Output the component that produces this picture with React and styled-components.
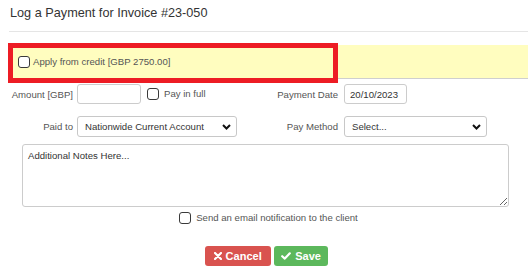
import React from "react";
import styled, { createGlobalStyle } from "styled-components";

const Global = createGlobalStyle`
  html, body { margin: 0; padding: 0; background: #fff; }
  body { font-family: "Liberation Sans", Arial, sans-serif; color: #333; overflow: hidden; }
  * { box-sizing: border-box; }
`;

const Page = styled.div`
  width: 528px;
  height: 273px;
  display: flex;
  flex-direction: column;
  position: relative;
`;

const Header = styled.div`
  margin-left: 9px;
  padding: 5px 0 9px 1px;
  border-bottom: 1px solid #e5e5e5;
`;

const Title = styled.h4`
  margin: 0;
  font-size: 12.7px;
  line-height: 17px;
  font-weight: normal;
  color: #333;
`;

const CreditBand = styled.div`
  position: relative;
  margin: 13px 0 0 9px;
  height: 34px;
  background: #fffdbf;
  border-bottom: 1px solid #cfcfcf;
  display: flex;
  align-items: center;
  padding-left: 9px;
  gap: 3px;
`;

const Highlight = styled.div`
  position: absolute;
  left: -1px;
  top: -2px;
  width: 330px;
  height: 40px;
  border: 5px solid #ed1c24;
  pointer-events: none;
`;

const Check = styled.input.attrs({ type: "checkbox" })`
  appearance: none;
  -webkit-appearance: none;
  margin: 0;
  width: 12px;
  height: 12px;
  border: 1px solid #3a3a3a;
  border-radius: 3px;
  background: #fff;
  flex: none;
`;

const SmallText = styled.span`
  font-size: 9.6px;
  color: ${(p) => p.$color || "#555"};
  line-height: 12px;
  margin-left: ${(p) => p.$shift || 0}px;
`;

const Row = styled.div`
  display: grid;
  grid-template-columns: 77px 160px 107px 143px;
  align-items: center;
  margin-top: ${(p) => p.$top}px;
  height: ${(p) => p.$height}px;
`;

const Label = styled.label`
  text-align: right;
  padding-right: ${(p) => p.$pad}px;
  font-size: 9.6px;
  color: #555;
  white-space: nowrap;
`;

const Field = styled.div`
  display: flex;
  align-items: center;
  gap: ${(p) => p.$gap || 0}px;
  height: 100%;
`;

const TextInput = styled.input`
  width: ${(p) => p.$w}px;
  height: 20px;
  border: 1px solid #cccccc;
  border-radius: 3px;
  padding: 0 5px;
  font-family: inherit;
  font-size: 9.6px;
  color: #333;
  outline: none;
`;

const SelectWrap = styled.div`
  position: relative;
  width: ${(p) => p.$w}px;
  height: 21px;
`;

const Select = styled.select`
  appearance: none;
  -webkit-appearance: none;
  width: 100%;
  height: 100%;
  border: 1px solid #c8c8c8;
  border-radius: 3px;
  background: #fff;
  padding: 0 0 0 7px;
  font-family: inherit;
  font-size: 9.6px;
  color: #333;
  outline: none;
`;

const Chevron = styled.svg`
  position: absolute;
  right: 6px;
  top: 8px;
  pointer-events: none;
`;

const Notes = styled.textarea`
  margin: 7px 0 0 22px;
  width: 487px;
  height: 63px;
  border: 1px solid #cccccc;
  border-radius: 3px;
  padding: 4px 5px;
  font-family: inherit;
  font-size: 9.6px;
  line-height: 13px;
  color: #333;
  resize: vertical;
  outline: none;
  &::placeholder { color: #333; opacity: 1; }
`;

const EmailRow = styled.div`
  display: flex;
  align-items: center;
  justify-content: center;
  gap: 5px;
  margin: 5px 0 0 9px;
  height: 12px;
`;

const Actions = styled.div`
  display: flex;
  justify-content: center;
  gap: 3px;
  margin: 22px 0 0 5px;
`;

const Button = styled.button`
  display: inline-flex;
  align-items: center;
  gap: 4px;
  height: 20px;
  padding: 0 ${(p) => p.$pad}px;
  border: none;
  border-radius: 3px;
  background: ${(p) => p.$bg};
  color: #fff;
  font-family: inherit;
  font-weight: bold;
  font-size: 11px;
  cursor: pointer;
`;

const Times = () => (
  <svg width="8" height="8" viewBox="0 0 8 8">
    <path d="M1 1 L7 7 M7 1 L1 7" stroke="#fff" strokeWidth="2.2" strokeLinecap="round" />
  </svg>
);

const Tick = () => (
  <svg width="10" height="8" viewBox="0 0 10 8">
    <path d="M1.2 4.2 L3.8 6.6 L8.8 1.3" stroke="#fff" strokeWidth="2.2" fill="none" strokeLinecap="round" strokeLinejoin="round" />
  </svg>
);

const ChevronIcon = () => (
  <Chevron width="9" height="6" viewBox="0 0 9 6">
    <path d="M1 1 L4.5 4.5 L8 1" stroke="#111" strokeWidth="2" fill="none" />
  </Chevron>
);

export default function App() {
  return (
    <Page>
      <Global />
      <Header>
        <Title>Log a Payment for Invoice #23-050</Title>
      </Header>
      <CreditBand>
        <Check id="credit" />
        <SmallText as="label" htmlFor="credit">Apply from credit [GBP 2750.00]</SmallText>
        <Highlight />
      </CreditBand>
      <Row $top={5} $height={20}>
        <Label $pad={4}>Amount [GBP]</Label>
        <Field $gap={6}>
          <TextInput $w={64} />
          <Check id="full" />
          <SmallText as="label" htmlFor="full" $shift={-1}>Pay in full</SmallText>
        </Field>
        <Label $pad={6}>Payment Date</Label>
        <Field>
          <TextInput $w={63} defaultValue="20/10/2023" />
        </Field>
      </Row>
      <Row $top={12} $height={21}>
        <Label $pad={4}>Paid to</Label>
        <Field>
          <SelectWrap $w={160}>
            <Select defaultValue="nw">
              <option value="nw">Nationwide Current Account</option>
            </Select>
            <ChevronIcon />
          </SelectWrap>
        </Field>
        <Label $pad={6}>Pay Method</Label>
        <Field>
          <SelectWrap $w={143}>
            <Select defaultValue="">
              <option value="">Select...</option>
            </Select>
            <ChevronIcon />
          </SelectWrap>
        </Field>
      </Row>
      <Notes placeholder="Additional Notes Here..." />
      <EmailRow>
        <Check id="email" />
        <SmallText as="label" htmlFor="email">Send an email notification to the client</SmallText>
      </EmailRow>
      <Actions>
        <Button $bg="#d9534f" $pad={9}>
          <Times />
          Cancel
        </Button>
        <Button $bg="#5cb85c" $pad={7.5}>
          <Tick />
          Save
        </Button>
      </Actions>
    </Page>
  );
}
